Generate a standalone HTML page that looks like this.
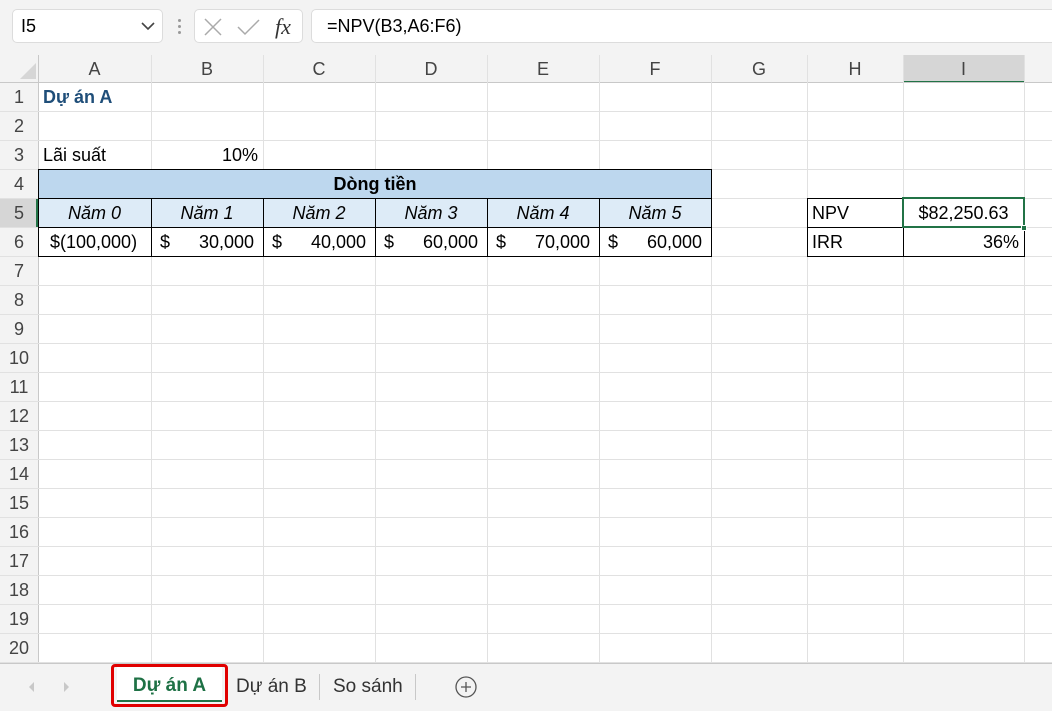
<!DOCTYPE html><html><head><meta charset="utf-8"><style>
*{margin:0;padding:0;box-sizing:border-box}
body{width:1052px;height:711px;overflow:hidden;background:#fff;font-family:"Liberation Sans",sans-serif;position:relative;color:#000}
.a{position:absolute}
.h{position:absolute;left:0;width:1052px;height:1px;background:#e1e1e1}
.v{position:absolute;top:55px;height:608px;width:1px;background:#e1e1e1}
.ch{position:absolute;top:55px;height:27px;font-size:18px;color:#444;text-align:center;line-height:29px}
.rh{position:absolute;left:0;width:38px;height:29px;font-size:18px;color:#444;text-align:center;line-height:29px}
.c{position:absolute;height:29px;line-height:29px;font-size:18px;padding:0 5px;white-space:pre}
</style></head><body>
<div class="a" style="left:0;top:0;width:1052px;height:55px;background:#f3f3f3"></div>
<div class="a" style="left:12px;top:9px;width:151px;height:34px;background:#fff;border:1px solid #dcdcdc;border-radius:5px;font-size:18px;line-height:32px;padding-left:8px">I5</div>
<svg class="a" style="left:140px;top:20px" width="16" height="12"><path d="M2 3 L8 9 L14 3" stroke="#444" stroke-width="1.6" fill="none"/></svg>
<div class="a" style="left:178px;top:19px;width:3px;height:3px;background:#999;border-radius:2px"></div>
<div class="a" style="left:178px;top:25px;width:3px;height:3px;background:#999;border-radius:2px"></div>
<div class="a" style="left:178px;top:31px;width:3px;height:3px;background:#999;border-radius:2px"></div>
<div class="a" style="left:194px;top:9px;width:109px;height:34px;background:#fff;border:1px solid #dcdcdc;border-radius:5px"></div>
<svg class="a" style="left:200px;top:15px" width="100" height="24"><path d="M5 4 L21 20 M21 4 L5 20" stroke="#aaa" stroke-width="1.5"/><path d="M38 12 L45 19 L59 5" stroke="#aaa" stroke-width="1.5" fill="none"/><text x="75" y="19" font-family="Liberation Serif" font-style="italic" font-size="22" fill="#333">fx</text></svg>
<div class="a" style="left:311px;top:9px;width:750px;height:34px;background:#fff;border:1px solid #dcdcdc;border-radius:5px;font-size:18px;line-height:32px;padding-left:15px">=NPV(B3,A6:F6)</div>
<div class="a" style="left:0;top:55px;width:1052px;height:28px;background:#f3f3f3"></div>
<div class="a" style="left:0;top:55px;width:38px;height:608px;background:#f3f3f3"></div>
<svg class="a" style="left:20px;top:63px" width="16" height="16"><path d="M16 0 L16 16 L0 16Z" fill="#d6d6d6"/></svg>
<div class="a" style="left:903px;top:55px;width:121px;height:28px;background:#d6d6d6;border-bottom:2px solid #217346"></div>
<div class="a" style="left:0;top:199px;width:38px;height:29px;background:#d6d6d6;border-right:2px solid #217346"></div>
<div class="h" style="top:82px;background:#c8c8c8"></div>
<div class="a" style="left:38px;top:55px;width:1px;height:608px;background:#c8c8c8"></div>
<div class="h" style="top:111px"></div><div class="h" style="top:140px"></div><div class="h" style="top:169px"></div><div class="h" style="top:198px"></div><div class="h" style="top:227px"></div><div class="h" style="top:256px"></div><div class="h" style="top:285px"></div><div class="h" style="top:314px"></div><div class="h" style="top:343px"></div><div class="h" style="top:372px"></div><div class="h" style="top:401px"></div><div class="h" style="top:430px"></div><div class="h" style="top:459px"></div><div class="h" style="top:488px"></div><div class="h" style="top:517px"></div><div class="h" style="top:546px"></div><div class="h" style="top:575px"></div><div class="h" style="top:604px"></div><div class="h" style="top:633px"></div><div class="h" style="top:662px"></div>
<div class="v" style="left:151px"></div><div class="v" style="left:263px"></div><div class="v" style="left:375px"></div><div class="v" style="left:487px"></div><div class="v" style="left:599px"></div><div class="v" style="left:711px"></div><div class="v" style="left:807px"></div><div class="v" style="left:903px"></div><div class="v" style="left:1024px"></div>
<div class="ch" style="left:38px;width:113px">A</div><div class="ch" style="left:151px;width:112px">B</div><div class="ch" style="left:263px;width:112px">C</div><div class="ch" style="left:375px;width:112px">D</div><div class="ch" style="left:487px;width:112px">E</div><div class="ch" style="left:599px;width:112px">F</div><div class="ch" style="left:711px;width:96px">G</div><div class="ch" style="left:807px;width:96px">H</div><div class="ch" style="left:903px;width:121px">I</div>
<div class="rh" style="top:83px">1</div><div class="rh" style="top:112px">2</div><div class="rh" style="top:141px">3</div><div class="rh" style="top:170px">4</div><div class="rh" style="top:199px">5</div><div class="rh" style="top:228px">6</div><div class="rh" style="top:257px">7</div><div class="rh" style="top:286px">8</div><div class="rh" style="top:315px">9</div><div class="rh" style="top:344px">10</div><div class="rh" style="top:373px">11</div><div class="rh" style="top:402px">12</div><div class="rh" style="top:431px">13</div><div class="rh" style="top:460px">14</div><div class="rh" style="top:489px">15</div><div class="rh" style="top:518px">16</div><div class="rh" style="top:547px">17</div><div class="rh" style="top:576px">18</div><div class="rh" style="top:605px">19</div><div class="rh" style="top:634px">20</div>
<div class="c" style="left:38px;top:83px;font-weight:bold;color:#1f4e79">Dự án A</div>
<div class="c" style="left:38px;top:141px">Lãi suất</div>
<div class="c" style="left:151px;top:141px;width:112px;text-align:right">10%</div>
<div class="a" style="left:38px;top:169px;width:674px;height:30px;background:#bdd7ee;border:1px solid #000;font-weight:bold;font-size:18px;text-align:center;line-height:29px">Dòng tiền</div>
<div class="a" style="left:38px;top:198px;width:674px;height:59px;border:1px solid #000"></div>
<div class="a" style="left:39px;top:199px;width:672px;height:28px;background:#ddebf7"></div>
<div class="a" style="left:38px;top:227px;width:674px;height:1px;background:#000"></div>
<div class="a" style="left:151px;top:198px;width:1px;height:59px;background:#000"></div><div class="a" style="left:263px;top:198px;width:1px;height:59px;background:#000"></div><div class="a" style="left:375px;top:198px;width:1px;height:59px;background:#000"></div><div class="a" style="left:487px;top:198px;width:1px;height:59px;background:#000"></div><div class="a" style="left:599px;top:198px;width:1px;height:59px;background:#000"></div>
<div class="c" style="left:38px;top:199px;width:113px;text-align:center;font-style:italic">Năm 0</div>
<div class="c" style="left:151px;top:199px;width:112px;text-align:center;font-style:italic">Năm 1</div>
<div class="c" style="left:263px;top:199px;width:112px;text-align:center;font-style:italic">Năm 2</div>
<div class="c" style="left:375px;top:199px;width:112px;text-align:center;font-style:italic">Năm 3</div>
<div class="c" style="left:487px;top:199px;width:112px;text-align:center;font-style:italic">Năm 4</div>
<div class="c" style="left:599px;top:199px;width:112px;text-align:center;font-style:italic">Năm 5</div>
<div class="c" style="left:45px;top:228px">$(100,000)</div>
<div class="c" style="left:155px;top:228px">$</div><div class="c" style="left:151px;top:228px;width:108px;text-align:right">30,000</div>
<div class="c" style="left:267px;top:228px">$</div><div class="c" style="left:263px;top:228px;width:108px;text-align:right">40,000</div>
<div class="c" style="left:379px;top:228px">$</div><div class="c" style="left:375px;top:228px;width:108px;text-align:right">60,000</div>
<div class="c" style="left:491px;top:228px">$</div><div class="c" style="left:487px;top:228px;width:108px;text-align:right">70,000</div>
<div class="c" style="left:603px;top:228px">$</div><div class="c" style="left:599px;top:228px;width:108px;text-align:right">60,000</div>
<div class="a" style="left:807px;top:198px;width:218px;height:59px;border:1px solid #000"></div>
<div class="a" style="left:807px;top:227px;width:218px;height:1px;background:#000"></div>
<div class="a" style="left:903px;top:198px;width:1px;height:59px;background:#000"></div>
<div class="c" style="left:807px;top:199px">NPV</div>
<div class="c" style="left:807px;top:228px">IRR</div>
<div class="c" style="left:903px;top:199px;width:121px;text-align:center">$82,250.63</div>
<div class="c" style="left:903px;top:228px;width:121px;text-align:right">36%</div>
<div class="a" style="left:902px;top:197px;width:123px;height:31px;border:2px solid #217346"></div>
<div class="a" style="left:1021px;top:225px;width:6px;height:6px;background:#217346;border:1px solid #fff"></div>
<div class="a" style="left:0;top:663px;width:1052px;height:48px;background:#f3f3f3;border-top:1px solid #c8c8c8"></div>
<svg class="a" style="left:26px;top:680px" width="50" height="14"><path d="M8 2 L3 7 L8 12Z" fill="#c8c8c8"/><path d="M38 2 L43 7 L38 12Z" fill="#c8c8c8"/></svg>
<div class="a" style="left:117px;top:664px;width:105px;height:38px;background:#fff;border-bottom:2px solid #217346"></div>
<div class="a" style="left:111px;top:664px;width:117px;height:43px;border:3px solid #e00000;border-radius:4px"></div>
<div class="a" style="left:117px;top:675px;width:105px;text-align:center;font-size:19px;font-weight:bold;color:#1e7145">Dự án A</div>
<div class="a" style="left:236px;top:676px;font-size:19px;color:#333">Dự án B</div>
<div class="a" style="left:319px;top:674px;width:1px;height:26px;background:#c8c8c8"></div>
<div class="a" style="left:333px;top:676px;font-size:19px;color:#333">So sánh</div>
<div class="a" style="left:415px;top:674px;width:1px;height:26px;background:#c8c8c8"></div>
<svg class="a" style="left:455px;top:676px" width="22" height="22"><circle cx="11" cy="11" r="10" stroke="#555" stroke-width="1.3" fill="none"/><path d="M11 6 V16 M6 11 H16" stroke="#555" stroke-width="1.3"/></svg>
</body></html>
